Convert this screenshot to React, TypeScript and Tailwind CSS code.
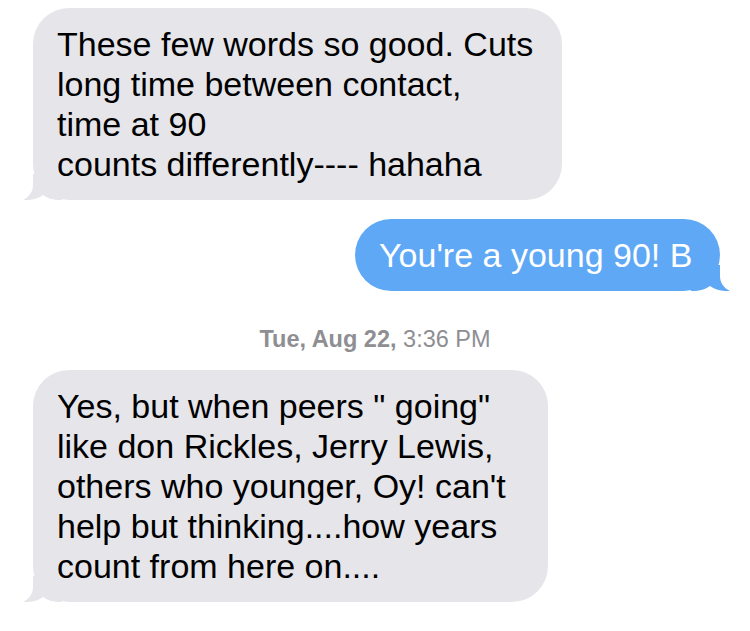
import React from 'react';

const Tail = ({ side, color }: { side: 'left' | 'right'; color: string }) => {
  const pos = side === 'left' ? 'left-[-11px]' : 'right-[-11px] -scale-x-100';
  return (
    <svg
      className={`absolute bottom-0 ${pos}`}
      width="40"
      height="26"
      viewBox="0 0 40 26"
    >
      <path
        d="M11 0 L11 11 C11 18 7 23 1 26 C9 26.5 16 24.5 21 21 C25 24 31 26 40 26 L40 0 Z"
        fill={color}
      />
    </svg>
  );
};

const Bubble = ({
  side,
  width,
  children
}: {
  side: 'left' | 'right';
  width: string;
  children: React.ReactNode;
}) => {
  const received = side === 'left';
  return (
    <div
      className={`relative ${width} rounded-[36px] pl-[24px] pt-[16px] pb-[16px] text-[34px] leading-[40px] whitespace-nowrap ${
        received ? 'ml-[33px] bg-[#e5e5ea] text-black' : 'ml-auto mr-[30px] bg-[#5fa8f5] text-white'
      }`}
    >
      <div className="relative z-10">{children}</div>
      <Tail side={side} color={received ? '#e5e5ea' : '#5fa8f5'} />
    </div>
  );
};

export default function App() {
  return (
    <div
      className="w-[750px] h-[631px] bg-white pt-[8px] overflow-hidden"
      style={{ fontFamily: '"Liberation Sans", Arial, sans-serif' }}
    >
      <Bubble side="left" width="w-[529px]">
        These few words so good. Cuts
        <br />
        long time between contact,
        <br />
        time at 90
        <br />
        counts differently---- hahaha
      </Bubble>

      <div className="mt-[19px]">
        <Bubble side="right" width="w-[365px]">You're a young 90! B</Bubble>
      </div>

      <div className="mt-[34px] mb-[17px] text-center text-[23.5px] leading-[28px] text-[#8e8e93]">
        <span className="font-semibold">Tue, Aug 22,</span> 3:36 PM
      </div>

      <Bubble side="left" width="w-[515px]">
        Yes, but when peers " going"
        <br />
        like don Rickles, Jerry Lewis,
        <br />
        others who younger, Oy! can't
        <br />
        help but thinking....how years
        <br />
        count from here on....
      </Bubble>
    </div>
  );
}
